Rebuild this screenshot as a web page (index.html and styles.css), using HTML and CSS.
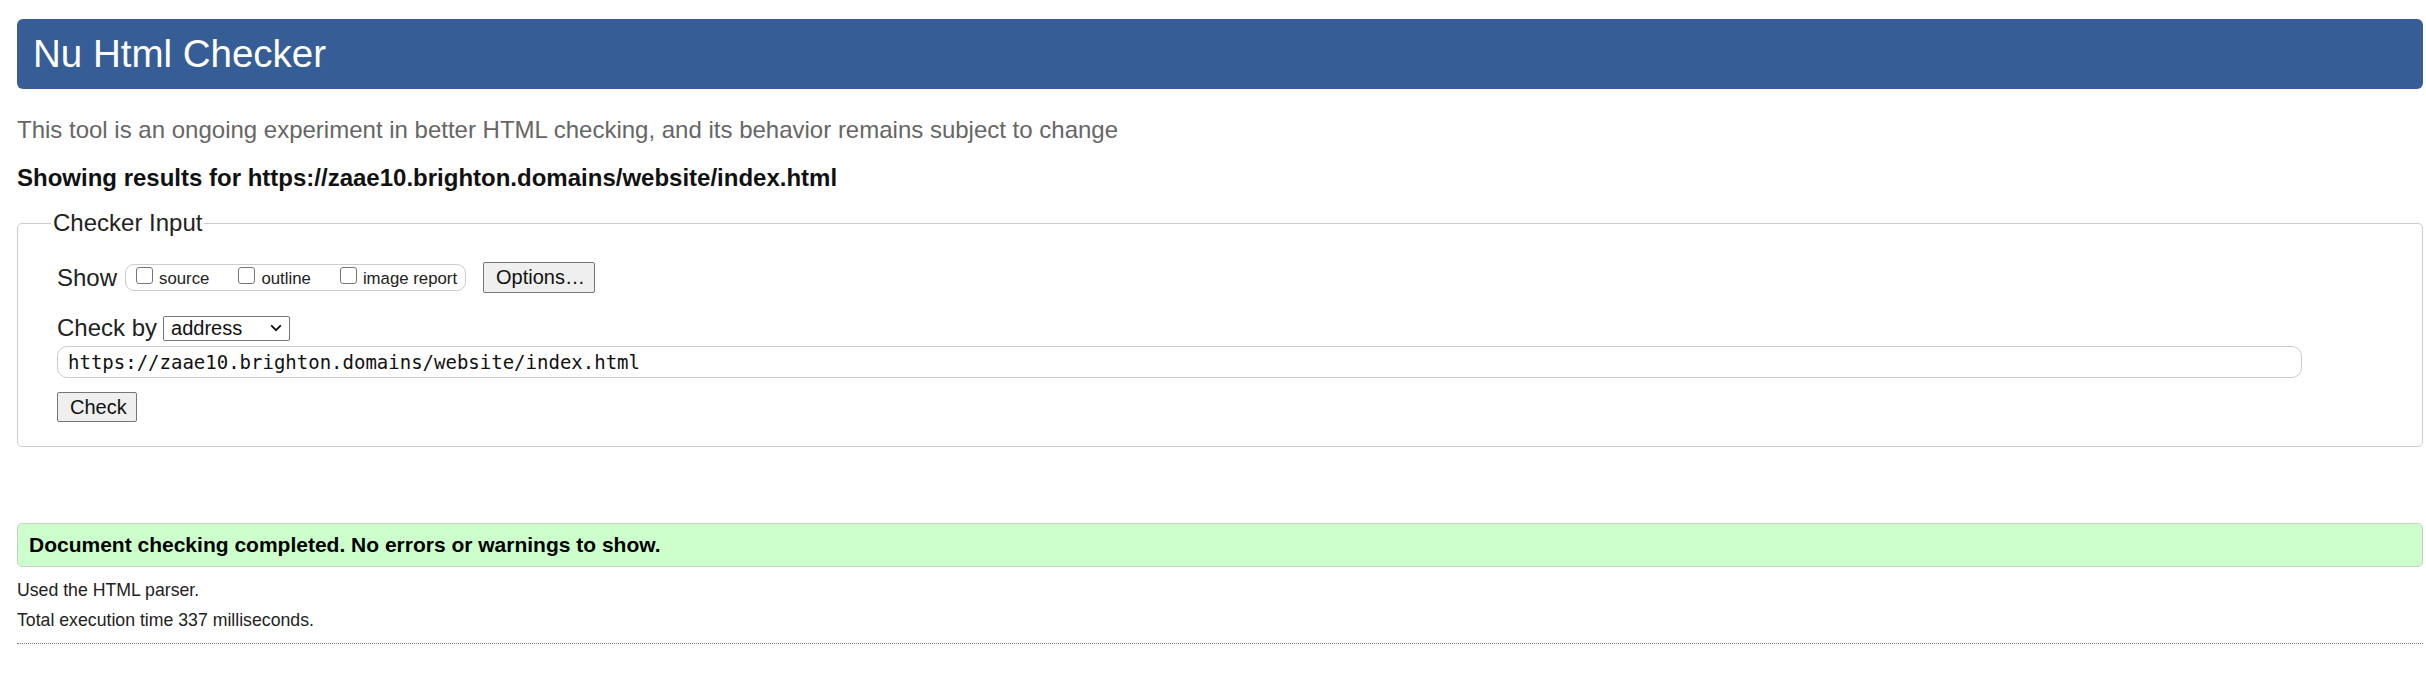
FILE: index.html
```html
<!DOCTYPE html>
<html lang="en">
<head>
<meta charset="utf-8">
<title>Showing results for https://zaae10.brighton.domains/website/index.html - Nu Html Checker</title>
<link rel="stylesheet" href="styles.css">
</head>
<body>
<h1 class="title">Nu Html Checker</h1>
<p class="subtitle">This tool is an ongoing experiment in better HTML checking, and its behavior remains subject to change</p>
<p class="showing">Showing results for https://zaae10.brighton.domains/website/index.html</p>
<form class="checker-form">
  <fieldset class="checker">
    <legend class="checker-legend">Checker Input</legend>
    <div class="show-row">
      <span class="row-label">Show</span>
      <span class="opts">
        <label class="opt"><input type="checkbox" class="cb"><span class="opt-text">source</span></label>
        <label class="opt"><input type="checkbox" class="cb"><span class="opt-text">outline</span></label>
        <label class="opt"><input type="checkbox" class="cb"><span class="opt-text">image report</span></label>
      </span>
      <button type="button" class="btn btn-options">Options…</button>
    </div>
    <div class="by-row">
      <span class="row-label">Check by</span>
      <span class="fake-select">
        <span class="fake-select-text">address</span>
        <svg class="chev" width="12" height="8" viewBox="0 0 12 8"><path d="M1.2 1.4 L6 6.2 L10.8 1.4" fill="none" stroke="#111" stroke-width="1.8"/></svg>
      </span>
    </div>
    <div class="url-row">
      <input type="text" class="url" value="https://zaae10.brighton.domains/website/index.html">
    </div>
    <div class="submit-row">
      <button type="button" class="btn btn-check">Check</button>
    </div>
  </fieldset>
</form>
<p class="success">Document checking completed. No errors or warnings to show.</p>
<p class="info first">Used the HTML parser.</p>
<p class="info">Total execution time 337 milliseconds.</p>
<hr class="dotted">
</body>
</html>
```
FILE: styles.css
```css
html, body {
  background: #fff;
}
body {
  margin: 0;
  padding: 19px 3px 0 17px;
  font-family: "Liberation Sans", Arial, sans-serif;
  color: #222;
}
.title {
  margin: 0;
  height: 70px;
  line-height: 70px;
  padding-left: 16px;
  font-size: 38.5px;
  font-weight: normal;
  color: #fff;
  background: #365d95;
  border-radius: 6px;
}
.subtitle {
  margin: 27px 0 0;
  font-size: 24px;
  line-height: 28px;
  color: #666;
}
.showing {
  margin: 20px 0 0;
  font-size: 24px;
  line-height: 28px;
  font-weight: bold;
  color: #111;
}
.checker-form {
  margin: 17px 0 0;
}
.checker {
  margin: 0;
  min-inline-size: 0;
  border: 1px solid #ccc;
  border-radius: 5px;
  padding: 25px 39px 24px 39px;
}
.checker-legend {
  margin-left: -6px;
  padding: 0 2px;
  font-size: 24px;
  line-height: 28px;
  color: #222;
}
.show-row {
  display: flex;
  align-items: center;
  height: 31px;
}
.row-label {
  font-size: 24px;
  line-height: 28px;
  color: #222;
}
.opts {
  margin-left: 8px;
  box-sizing: border-box;
  height: 27px;
  width: 341px;
  display: flex;
  align-items: baseline;
  padding: 2px 0 0 10px;
  border: 1px solid #ccc;
  border-radius: 9px;
}
.opt {
  display: flex;
  align-items: baseline;
  margin-right: 29px;
}
.opt:last-child {
  margin-right: 0;
}
.cb {
  -webkit-appearance: none;
  appearance: none;
  box-sizing: border-box;
  width: 17px;
  height: 17px;
  margin: 0 6px 1.5px 0;
  border: 1px solid #767676;
  border-radius: 3px;
  background: #fff;
}
.opt-text {
  font-size: 16.8px;
  line-height: 16.8px;
  color: #222;
}
.btn {
  box-sizing: border-box;
  margin: 0;
  font-family: "Liberation Sans", Arial, sans-serif;
  font-size: 20px;
  color: #111;
  background: #efefef;
  border: 1px solid #767676;
  border-radius: 2px;
  padding: 0 12px;
}
.btn-options {
  margin-left: 17px;
  height: 31px;
  width: 112px;
}
.by-row {
  margin-top: 21px;
  display: flex;
  align-items: center;
  height: 28px;
}
.fake-select {
  margin-left: 6px;
  box-sizing: border-box;
  width: 127px;
  height: 25px;
  display: flex;
  align-items: center;
  justify-content: space-between;
  padding: 0 7px 0 7px;
  border: 1px solid #767676;
  border-radius: 2px;
  background: #fff;
}
.fake-select-text {
  font-size: 20px;
  line-height: 23px;
  color: #111;
}
.chev {
  display: block;
}
.url-row {
  margin-top: 4px;
}
.url {
  box-sizing: border-box;
  display: block;
  width: 2245px;
  height: 32px;
  margin: 0;
  padding: 0 10px;
  font-family: "DejaVu Sans Mono", "Liberation Mono", monospace;
  font-size: 19px;
  color: #111;
  border: 1px solid #ccc;
  border-radius: 10px;
  background: #fff;
  outline: none;
}
.submit-row {
  margin-top: 14px;
}
.btn-check {
  height: 30px;
  width: 80px;
  display: block;
}
.success {
  margin: 76px 0 0;
  box-sizing: border-box;
  height: 44px;
  line-height: 42px;
  padding-left: 11px;
  font-size: 21px;
  font-weight: bold;
  color: #000;
  background: #ccffcc;
  border: 1px solid #ccc;
  border-radius: 5px;
}
.info {
  margin: 0;
  font-size: 17.7px;
  line-height: 30px;
  color: #222;
}
.info.first {
  margin-top: 8px;
}
.dotted {
  margin: 8px 0 0;
  border: 0;
  border-top: 1px dotted #777;
  height: 0;
}
```
